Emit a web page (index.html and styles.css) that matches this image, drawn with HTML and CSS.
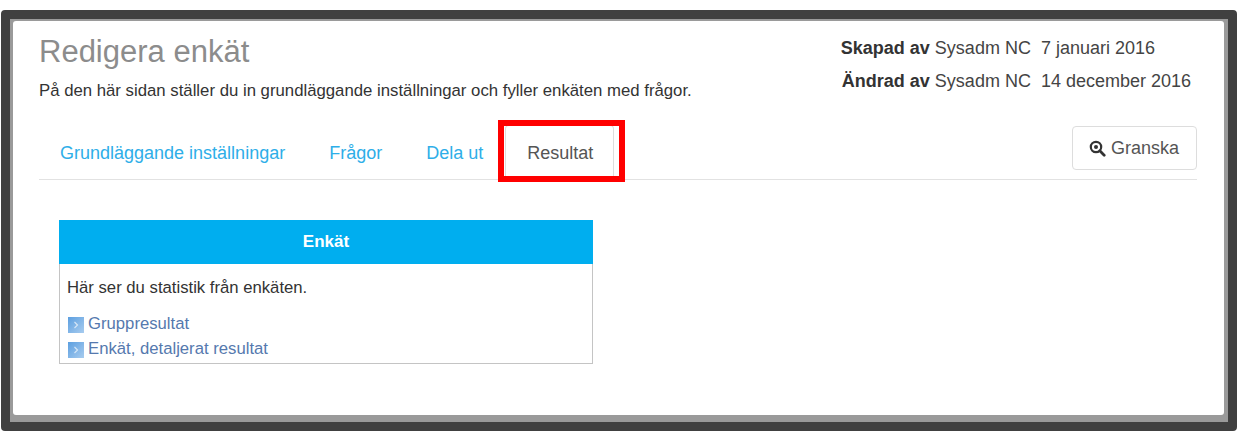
FILE: index.html
```html
<!DOCTYPE html>
<html lang="sv">
    <head>
        <title>Redigera enkät</title>
        <meta charset="UTF-8">
        <link rel="stylesheet" href="styles.css">
    </head>
    <body>
        <div id="frame">
            <div id="page">
                <div id="top">
                    <div>
                        <h1 id="title">Redigera enkät</h1>
                        <p id="intro">På den här sidan ställer du in grundläggande inställningar och fyller enkäten med frågor.</p>
                    </div>
                    <div id="meta">
                        <div class="who"><b>Skapad av</b> Sysadm NC</div>
                        <div class="when">7 januari 2016</div>
                        <div class="who"><b>Ändrad av</b> Sysadm NC</div>
                        <div class="when">14 december 2016</div>
                    </div>
                </div>
                <div id="tabs">
                    <a class="tab" href="#">Grundläggande inställningar</a>
                    <a class="tab" href="#">Frågor</a>
                    <a class="tab" href="#">Dela ut</a>
                    <a class="tab active" href="#">Resultat</a>
                    <button type="button" id="preview">
                        <svg width="17" height="17" viewBox="0 0 17 17">
                            <circle cx="7" cy="7" r="5.2" fill="none" stroke="#333" stroke-width="2.2"/>
                            <circle cx="7" cy="7" r="2" fill="#333"/>
                            <path d="M10.8 10.8 L15.2 15.2" stroke="#333" stroke-width="2.8" stroke-linecap="round"/>
                        </svg>
                        Granska
                    </button>
                </div>
                <div id="panel">
                    <div id="panel_head">Enkät</div>
                    <div id="panel_body">
                        <p id="panel_text">Här ser du statistik från enkäten.</p>
                        <a class="link" href="#"><span class="arrow"><svg width="8" height="8" viewBox="0 0 8 8"><path d="M2.5 1 L5.5 4 L2.5 7" fill="none" stroke="#d5e6f6" stroke-width="1.2"/></svg></span>Gruppresultat</a>
                        <a class="link" href="#"><span class="arrow"><svg width="8" height="8" viewBox="0 0 8 8"><path d="M2.5 1 L5.5 4 L2.5 7" fill="none" stroke="#d5e6f6" stroke-width="1.2"/></svg></span>Enkät, detaljerat resultat</a>
                    </div>
                </div>
            </div>
            <div id="marker"></div>
        </div>
    </body>
</html>
```

FILE: styles.css
```css
body {
    font-family: "Liberation Sans", Arial, sans-serif;
    margin: 0;
    background-color: #fff;
    color: #333;
}
#frame {
    position: relative;
    box-sizing: border-box;
    width: 1236px;
    height: 421px;
    margin: 10px 0 0 1px;
    border: 9px solid #404040;
    border-radius: 4px;
    background-color: #9a9a9a;
    padding: 2px 4px 7px 3px;
}
#page {
    box-sizing: border-box;
    height: 100%;
    background-color: #fff;
    border-radius: 3px;
    padding: 13px 27px 0 26px;
}
#top {
    display: flex;
    justify-content: space-between;
    height: 90px;
}
#title {
    margin: 0;
    font-size: 31px;
    font-weight: normal;
    line-height: 36px;
    color: #8c8c8c;
}
#intro {
    margin: 11px 0 0 0;
    font-size: 16.75px;
    line-height: 20px;
}
#meta {
    display: grid;
    grid-template-columns: auto auto;
    column-gap: 10px;
    grid-auto-rows: 33px;
    align-content: start;
    margin-top: -2px;
    margin-right: 6px;
    font-size: 18px;
    line-height: 33px;
}
#meta b {
    color: #333;
}
.who {
    text-align: right;
    color: #444;
}
.when {
    color: #444;
}
#tabs {
    display: flex;
    align-items: flex-end;
    height: 55px;
    border-bottom: 1px solid #e2e2e2;
}
.tab {
    box-sizing: border-box;
    height: 54px;
    padding: 17px 21px 0 21px;
    font-size: 18px;
    line-height: 20px;
    color: #2eaee8;
    text-decoration: none;
    border: 1px solid transparent;
    border-bottom: none;
}
.tab:first-child {
    margin-left: -1px;
}
.tab.active {
    margin-bottom: -1px;
    height: 55px;
    padding-left: 21px;
    padding-right: 20px;
    color: #555;
    background-color: #fff;
    border-color: #ddd;
    border-radius: 4px 4px 0 0;
}
#preview {
    display: flex;
    align-items: center;
    gap: 5px;
    margin-left: auto;
    margin-bottom: 9px;
    height: 44px;
    width: 125px;
    padding: 0 0 0 16px;
    font-family: inherit;
    font-size: 18px;
    color: #555;
    background-color: #fff;
    border: 1px solid #ddd;
    border-radius: 4px;
}
#panel {
    width: 534px;
    height: 144px;
    box-sizing: border-box;
    margin: 40px 0 0 20px;
    border: 1px solid #c4c4c4;
}
#panel_head {
    height: 44px;
    margin: -1px -1px 0 -1px;
    background-color: #00aeef;
    color: #fff;
    font-size: 17px;
    font-weight: bold;
    line-height: 43px;
    text-align: center;
}
#panel_body {
    padding: 14px 7px 0 7px;
}
#panel_text {
    margin: 0 0 13px 0;
    font-size: 16.7px;
    line-height: 20px;
}
.link {
    display: flex;
    align-items: center;
    height: 25px;
    font-size: 16.7px;
    color: #5579ae;
    text-decoration: none;
}
.arrow {
    display: flex;
    align-items: center;
    justify-content: center;
    width: 16px;
    height: 16px;
    margin: 2px 4px 0 1px;
    background: linear-gradient(135deg, #5c9fe0, #a8ccef);
}
#marker {
    position: absolute;
    left: 488px;
    top: 101px;
    width: 127px;
    height: 62px;
    box-sizing: border-box;
    border: 6px solid #f00;
}
```
